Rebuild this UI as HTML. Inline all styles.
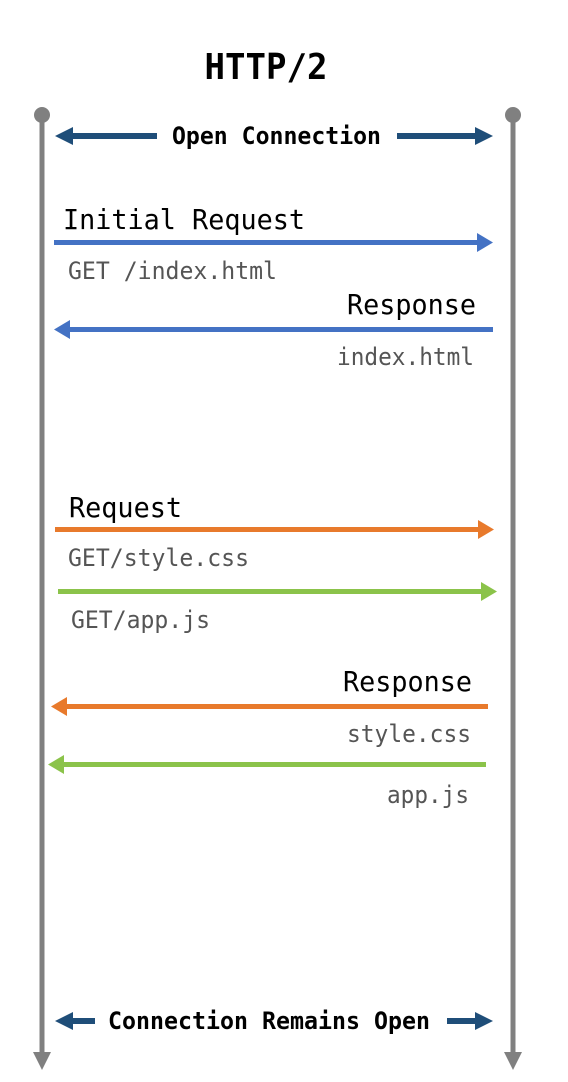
<!DOCTYPE html>
<html><head><meta charset="utf-8"><style>
html,body{margin:0;padding:0;background:#fff;}
svg{display:block;}
text{font-family:"DejaVu Sans Mono","Liberation Mono",monospace;}
</style></head><body>
<svg width="568" height="1082" viewBox="0 0 568 1082" xmlns="http://www.w3.org/2000/svg">
<text x="266" y="79" text-anchor="middle" font-size="36" font-weight="bold" fill="#000" textLength="123" lengthAdjust="spacingAndGlyphs">HTTP/2</text>
<g fill="#808080" stroke="none">
<circle cx="42" cy="115" r="8"/>
<rect x="39.5" y="115" width="5" height="940"/>
<polygon points="33,1052 51,1052 42,1070"/>
<circle cx="513" cy="115" r="8"/>
<rect x="510.5" y="115" width="5" height="940"/>
<polygon points="504,1052 522,1052 513,1070"/>
</g>
<g fill="#1f4e79">
<rect x="68" y="133" width="89" height="6"/><polygon points="55,136 73,127 73,145"/>
<rect x="397" y="133" width="82" height="6"/><polygon points="493,136 475,127 475,145"/>
<rect x="68" y="1018" width="27" height="6"/><polygon points="55,1021 73,1012 73,1030"/>
<rect x="447" y="1018" width="32" height="6"/><polygon points="493,1021 475,1012 475,1030"/>
</g>
<text x="172" y="144" font-size="24" font-weight="bold" fill="#000" textLength="209" lengthAdjust="spacingAndGlyphs">Open Connection</text>
<text x="108" y="1029" font-size="24" font-weight="bold" fill="#000" textLength="322" lengthAdjust="spacingAndGlyphs">Connection Remains Open</text>
<text x="63" y="229" font-size="28" fill="#000" textLength="242" lengthAdjust="spacingAndGlyphs">Initial Request</text>
<g fill="#4472c4">
<rect x="54" y="240" width="425" height="5"/><polygon points="493,242.5 477,233 477,252"/>
<rect x="70" y="327" width="423" height="5"/><polygon points="54,329.5 70,320 70,339"/>
</g>
<text x="68" y="279" font-size="24" fill="#555" textLength="209" lengthAdjust="spacingAndGlyphs">GET /index.html</text>
<text x="476" y="314" text-anchor="end" font-size="28" fill="#000" textLength="129" lengthAdjust="spacingAndGlyphs">Response</text>
<text x="474" y="365" text-anchor="end" font-size="24" fill="#555" textLength="137" lengthAdjust="spacingAndGlyphs">index.html</text>
<text x="69" y="517" font-size="28" fill="#000" textLength="113" lengthAdjust="spacingAndGlyphs">Request</text>
<g fill="#e87a2c">
<rect x="55" y="527" width="425" height="5"/><polygon points="494,529.5 478,520 478,539"/>
<rect x="66" y="704" width="422" height="5"/><polygon points="51,706.5 67,697 67,716"/>
</g>
<g fill="#8bc34a">
<rect x="58" y="589" width="425" height="5"/><polygon points="497,591.5 481,582 481,601"/>
<rect x="63" y="762" width="423" height="5"/><polygon points="48,764.5 64,755 64,774"/>
</g>
<text x="68" y="566" font-size="24" fill="#555" textLength="181" lengthAdjust="spacingAndGlyphs">GET/style.css</text>
<text x="71" y="628" font-size="24" fill="#555" textLength="139" lengthAdjust="spacingAndGlyphs">GET/app.js</text>
<text x="472" y="691" text-anchor="end" font-size="28" fill="#000" textLength="129" lengthAdjust="spacingAndGlyphs">Response</text>
<text x="471" y="742" text-anchor="end" font-size="24" fill="#555" textLength="124" lengthAdjust="spacingAndGlyphs">style.css</text>
<text x="469" y="803" text-anchor="end" font-size="24" fill="#555" textLength="82" lengthAdjust="spacingAndGlyphs">app.js</text>
</svg>
</body></html>
